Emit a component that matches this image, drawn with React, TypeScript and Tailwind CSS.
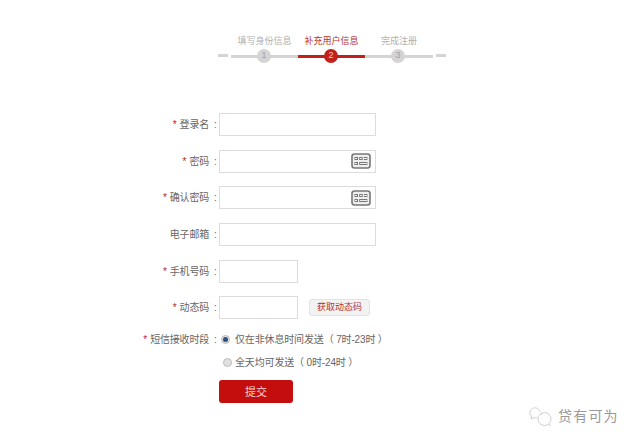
import React from 'react';

const font = { cjk: "font-['Liberation_Sans','Noto_Sans_CJK_SC',sans-serif]" };

const KeyboardIcon: React.FC = () => (
    <svg width="20" height="16" viewBox="0 0 20 16" fill="none" stroke="#777" className="shrink-0">
        <rect x="1" y="1" width="18" height="14" rx="2.5" strokeWidth="1.6" fill="#eee" />
        <rect x="4" y="4.5" width="2.5" height="2" strokeWidth="1" />
        <rect x="8.7" y="4.5" width="2.5" height="2" strokeWidth="1" />
        <rect x="13.4" y="4.5" width="2.5" height="2" strokeWidth="1" />
        <rect x="4" y="9.5" width="2.5" height="2" strokeWidth="1" />
        <rect x="8.7" y="9.5" width="7.2" height="2" strokeWidth="1" />
    </svg>
);

const Step: React.FC<{ label: string; num: number; active?: boolean; wide?: boolean }> = ({ label, num, active, wide }) => (
    <div className={`flex flex-col items-center ${wide ? 'w-[68px]' : 'w-[67px]'}`}>
        <div className={`text-[9px] leading-[14px] h-[14px] whitespace-nowrap ${active ? 'text-[#b5312a]' : 'text-[#b0b0b0]'}`}>{label}</div>
        <div className="relative w-full h-[14px] mt-[1px] flex items-center">
            <div className={`w-full h-[3px] ${active ? 'bg-[#c0221a]' : 'bg-[#d4d4d4]'}`} />
            <div className={`absolute left-[26px] top-0 w-[14px] h-[14px] rounded-full flex items-center justify-center text-[9px] ${active ? 'bg-[#c0221a] text-[#f3c9c6]' : 'bg-[#d4d4d4] text-[#a0a0a0]'}`}>
                {num}
            </div>
        </div>
    </div>
);

const Label: React.FC<{ text: string; required?: boolean }> = ({ text, required }) => (
    <div className="w-[217px] flex justify-end text-[10px] text-[#666] whitespace-nowrap">
        {required && <span className="text-[#c0221a] mr-[3px]">*</span>}
        <span className="tracking-[-0.2px]">{text}</span>
        <span className="ml-[5px] w-[3px]">:</span>
    </div>
);

const Field: React.FC<{ label: string; required?: boolean; short?: boolean; keyboard?: boolean; children?: React.ReactNode }> = ({ label, required, short, keyboard, children }) => (
    <div className="flex items-center h-[23px] gap-[2px]">
        <Label text={label} required={required} />
        <div className={`h-[23px] border border-[#dcdcdc] bg-white flex items-center justify-end pr-[4px] ${short ? 'w-[79px]' : 'w-[157px]'}`}>
            {keyboard && <KeyboardIcon />}
        </div>
        {children}
    </div>
);

const Radio: React.FC<{ checked?: boolean }> = ({ checked }) => (
    <div className="w-[9px] h-[9px] rounded-full border border-[#bbb] bg-[#e0e0e0] flex items-center justify-center">
        {checked && <div className="w-[5px] h-[5px] rounded-full bg-[#2f4f80]" />}
    </div>
);

export default function App() {
    return (
        <div className={`relative w-[640px] h-[445px] bg-white overflow-hidden ${font.cjk}`}>
            {/* steps */}
            <div className="flex items-end pl-[218px] pt-[34px]">
                <div className="w-[10px] h-[3px] bg-[#d4d4d4] mb-[6px] mr-[3px]" />
                <Step label="填写身份信息" num={1} />
                <Step label="补充用户信息" num={2} active />
                <Step label="完成注册" num={3} wide />
                <div className="w-[10px] h-[3px] bg-[#d4d4d4] mb-[6px] ml-[3px]" />
            </div>

            {/* form */}
            <div className="flex flex-col gap-[13.7px] mt-[50px]">
                <Field label="登录名" required />
                <Field label="密码" required keyboard />
                <Field label="确认密码" required keyboard />
                <Field label="电子邮箱" />
                <Field label="手机号码" required short />
                <Field label="动态码" required short>
                    <button className="ml-[9px] w-[61px] h-[17px] rounded-[3px] border border-[#e2e2e2] bg-[#f3f3f3] text-[9px] leading-none text-[#b5312a] whitespace-nowrap">
                        获取动态码
                    </button>
                </Field>
            </div>

            <div className="flex items-center mt-[13px] gap-[2px] h-[14px]">
                <Label text="短信接收时段" required />
                <div className="ml-[2px] flex items-center gap-[5px] text-[10px] tracking-[-0.15px] text-[#666] whitespace-nowrap">
                    <Radio checked />
                    <span>仅在非休息时间发送（ 7时-23时 ）</span>
                </div>
            </div>
            <div className="flex items-center mt-[9px] pl-[223px] gap-[3px] h-[14px] text-[10px] tracking-[-0.15px] text-[#666] whitespace-nowrap">
                <Radio />
                <span>全天均可发送（ 0时-24时 ）</span>
            </div>

            <button className="block ml-[219px] mt-[11px] w-[74px] h-[23px] rounded-[3px] bg-[#c40d0d] text-[#f4d4d4] text-[11px]">提交</button>

            {/* watermark */}
            <div className="absolute left-[528px] top-[405px] flex items-center gap-[4px]">
                <svg width="26" height="22" viewBox="0 0 26 22" fill="none" stroke="#cfcfcf" strokeWidth="1">
                    <path d="M12 7 C11 3 7 2 4.5 3.5 C1.5 5 1 9 3.5 11 L3 14 L6 12.5 C7 13 8 13 9 12.8" />
                    <circle cx="16.5" cy="14" r="6.5" />
                    <path d="M21 19 L22.5 21 M13 10 L14 9" />
                </svg>
                <span className="text-[14px] leading-none text-[#9a9a9a] tracking-[1.2px] whitespace-nowrap">贷有可为</span>
            </div>
        </div>
    );
}
